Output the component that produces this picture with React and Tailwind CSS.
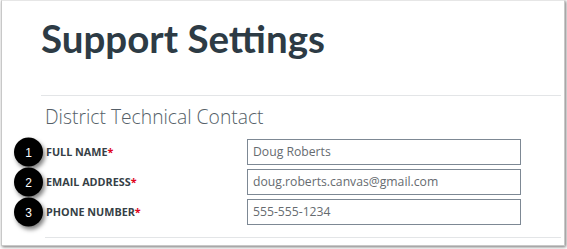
import React from 'react';

const fields = [
  { n: 1, label: 'FULL NAME', value: 'Doug Roberts' },
  { n: 2, label: 'EMAIL ADDRESS', value: 'doug.roberts.canvas@gmail.com' },
  { n: 3, label: 'PHONE NUMBER', value: '555-555-1234' },
];

const Marker = ({ n }) => (
  <span className="absolute left-[-32px] top-1/2 -translate-y-1/2 w-[29px] h-[29px] rounded-full bg-black text-white flex items-center justify-center text-[12px] shadow-[2px_3px_4px_rgba(0,0,0,0.5)] font-['Liberation_Sans',sans-serif]">
    {n}
  </span>
);

const FieldRow = ({ field }) => (
  <div className="relative flex items-center h-[26px]">
    <Marker n={field.n} />
    <label className="w-[201px] text-[10.8px] font-bold text-[#363f46]">
      {field.label}
      <span className="text-[#e0061f]">*</span>
    </label>
    <div className="w-[274px] h-[26px] border border-[#7d8894] px-[5px] flex items-center text-[12.2px] text-[#666b70]">
      {field.value}
    </div>
  </div>
);

export default function App() {
  return (
    <div className="w-[567px] h-[249px] bg-white overflow-hidden pl-[1px] font-['Open_Sans',sans-serif]">
      <div className="w-[564px] h-[246px] bg-white border border-[#c8c8c8] border-t-[#e6e6e6] shadow-[1px_1px_3px_rgba(0,0,0,0.55)] pl-[39px] pr-[3px]">
        <h1 className="mt-[13px] h-[48px] leading-[48px] text-[38.5px] font-bold text-[#2d3b45] font-['Lato',sans-serif]">
          Support Settings
        </h1>
        <div className="mt-[33px] border-t border-[#e3e5e7]" />
        <h2 className="mt-[7px] pl-[4px] h-[28px] leading-[28px] text-[19.3px] font-light text-[#555f68]">
          District Technical Contact
        </h2>
        <div className="mt-[8px] pl-[5px] flex flex-col gap-[4px]">
          {fields.map((f) => (
            <FieldRow key={f.n} field={f} />
          ))}
        </div>
        <div className="mt-[12px] ml-[4px] border-t border-[#e3e5e7]" />
      </div>
    </div>
  );
}
